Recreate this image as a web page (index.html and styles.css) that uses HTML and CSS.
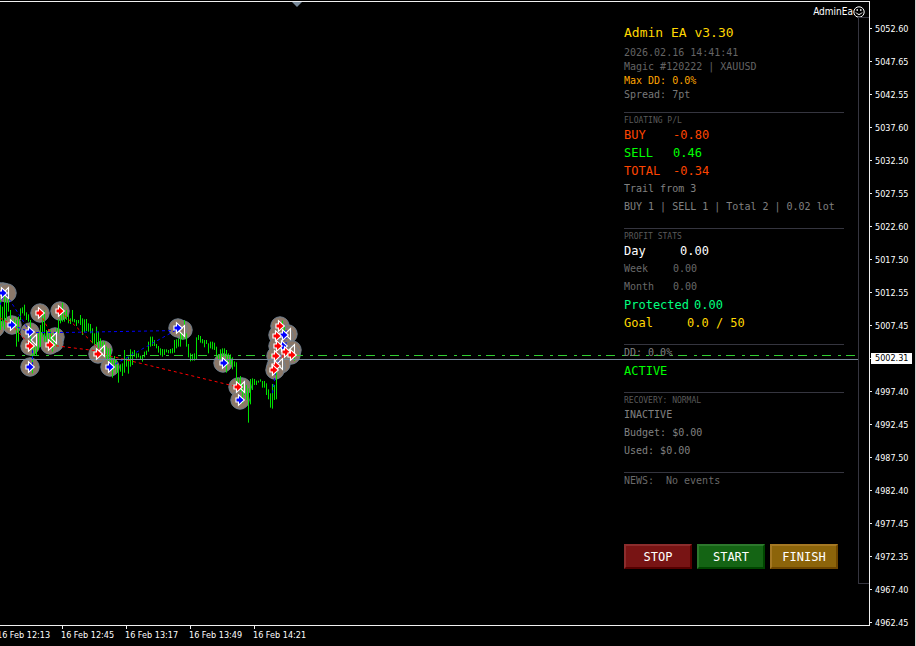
FILE: index.html
```html
<!DOCTYPE html>
<html lang="en">
<head>
<meta charset="utf-8">
<title>Admin EA v3.30</title>
<link rel="stylesheet" href="styles.css">
</head>
<body>
<div class="terminal">
  <main class="chart">
    <svg class="plot" aria-hidden="true">
      <defs>
        <g id="halo"><circle r="9.2"/></g>
        <g id="arrow"><path d="M-3.500-1.500H-1V-4L3.500 0L-1 4V1.500H-3.500z" stroke="#fff" stroke-width="2.2"/><path d="M-3.500-1.500H-1V-4L3.500 0L-1 4V1.500H-3.500z" stroke="none"/></g>
        <path id="tri" d="M-3 0L2.5-5.500V5.500z" fill="none" stroke="#fff" stroke-width="1.1"/>
      </defs>
      <path d="M292 2h10l-5 5z" fill="#778899"/>
      <g fill="#8b7869" stroke="#708090" stroke-width="1">
        <use href="#halo" x="-5" y="328"/><use href="#halo" x="0" y="292"/><use href="#halo" x="3" y="292"/><use href="#halo" x="7" y="293"/>
        <use href="#halo" x="12" y="325"/><use href="#halo" x="30" y="332"/><use href="#halo" x="35" y="339"/><use href="#halo" x="30" y="346"/>
        <use href="#halo" x="30" y="367"/><use href="#halo" x="40" y="313"/><use href="#halo" x="60" y="311"/><use href="#halo" x="55" y="337"/>
        <use href="#halo" x="54" y="343"/><use href="#halo" x="50" y="345"/><use href="#halo" x="103" y="350"/><use href="#halo" x="98" y="354"/>
        <use href="#halo" x="110" y="367"/><use href="#halo" x="183" y="330"/><use href="#halo" x="178" y="328"/><use href="#halo" x="223" y="363"/>
        <use href="#halo" x="242" y="387"/><use href="#halo" x="238" y="387"/><use href="#halo" x="240" y="400"/>
        <use href="#halo" x="280" y="326"/><use href="#halo" x="288" y="334"/><use href="#halo" x="284" y="336"/><use href="#halo" x="278" y="335"/>
        <use href="#halo" x="278" y="346"/><use href="#halo" x="284" y="347"/><use href="#halo" x="286" y="352"/><use href="#halo" x="292" y="350"/>
        <use href="#halo" x="291" y="355"/><use href="#halo" x="276" y="356"/><use href="#halo" x="281" y="364"/><use href="#halo" x="276" y="366"/><use href="#halo" x="275" y="370"/>
      </g>
      <g stroke="#00e600" stroke-width="3">
        <path transform="translate(.167 270) scale(.33333)" d="M1 90V180M7 110V170M13 75V178M19 85V150M25 85V125M31 120V160M37 150V175M43 145V170M49 150V230M55 140V215M61 115V150M67 112V130M73 104V137M79 127V150M85 133V155M91 150V240M97 230V310M103 230V255M109 200V255M115 185V240M121 165V230M127 130V200M133 122V215M139 180V215M145 185V235M151 180V215M157 190V245M163 200V230M169 175V230M175 148V190M181 125V160M187 98V155M193 120V155M199 120V150M205 135V160M211 145V162M217 120V155M223 147V157M229 150V168M235 150V160M241 135V165M247 145V195M253 148V187M259 147V183M265 160V185M271 162V190M277 175V220M283 190V225M289 170V225M295 185V235M301 205V230M307 215V245M313 215V250M319 230V270M325 235V275M331 235V290M337 270V323M343 258V300M349 270V310M355 285V338M361 283V305M367 280V318M373 240V308M379 265V290M385 260V311M391 238V290M397 245V285M403 240V260M409 250V265M415 250V262M421 257V265"/>
        <path transform="translate(140.167 270) scale(.33333)" d="M1 258V268M7 255V275M13 245V262M19 242V255M25 215V245M31 200V230M37 200V228M43 210V228M49 222V235M55 228V248M61 235V256M67 237V260M73 238V255M79 238V247M85 240V250M91 237V250M97 235V250M103 210V248M109 208V235M115 205V230M121 190V230M127 190V210M133 150V205M139 190V230M145 222V262M151 250V274M157 252V272M163 250V272M169 202V270M175 195V210M181 198V218M187 207V220M193 210V232M199 210V222M205 220V250M211 215V235M217 215V238M223 218V240M229 230V262M235 252V268M241 238V268M247 235V262M253 235V255M259 240V308M265 250V282M271 253V285M277 262V298M283 274V290M289 277V350M295 325V355M301 318V365M307 340V400M313 350V375M319 345V390M325 355V458M331 327V403M337 325V360M343 327V345M349 332V345M355 332V338M361 328V335M367 333V353M373 333V353M379 340V375M385 358V388M391 370V413M397 342V416M403 345V390M409 280V388M427 152V185M433 170V200M463 250V272"/>
      </g>
      <g fill="none" stroke-width="1" stroke-dasharray="3 3">
        <path stroke="#0000ff" d="M0 305L6 290M6 294L30 332M12 325L30 332M30 332.500L32.500 345V367M30 332.500L64 332.500L178 330.500M110 367L178 329M272.500 393L276 370L285 340M286 330V350"/>
        <path stroke="#ff0000" d="M0 318L12 325L30 345M40 313L54 340M60 311L100 350M50 345L98 351M98 353L238 387M276 366L278 330M283 330V360M288 352L280 360"/>
      </g>
      <path stroke="#32cd32" stroke-width="1" stroke-dasharray="9 7 3 5" d="M6 355.500H859"/>
      <path stroke="#778899" stroke-width="1" d="M0 359.500H859"/>
      <use href="#tri" x="6" y="293"/><use href="#tri" x="34" y="340"/><use href="#tri" x="54" y="338"/><use href="#tri" x="102" y="351"/><use href="#tri" x="182" y="331"/><use href="#tri" x="242" y="387"/><use href="#tri" x="288" y="334"/><use href="#tri" x="292" y="350"/><use href="#tri" x="280" y="364"/>
      <g fill="#0000ff">
        <use href="#arrow" x="3" y="293"/><use href="#arrow" x="12" y="325"/><use href="#arrow" x="30" y="332"/><use href="#arrow" x="30" y="367"/><use href="#arrow" x="110" y="367"/><use href="#arrow" x="178" y="328"/><use href="#arrow" x="224" y="363"/><use href="#arrow" x="240" y="400"/><use href="#arrow" x="284" y="335"/><use href="#arrow" x="283" y="346"/>
      </g>
      <g fill="#ff0000">
        <use href="#arrow" x="30" y="346"/><use href="#arrow" x="40" y="313"/><use href="#arrow" x="60" y="311"/><use href="#arrow" x="50" y="345"/><use href="#arrow" x="98" y="354"/><use href="#arrow" x="238" y="387"/><use href="#arrow" x="280" y="326"/><use href="#arrow" x="277" y="336"/><use href="#arrow" x="278" y="346"/><use href="#arrow" x="286" y="352"/><use href="#arrow" x="292" y="355"/><use href="#arrow" x="276" y="356"/><use href="#arrow" x="276" y="366"/><use href="#arrow" x="274" y="370"/>
      </g>
    </svg>
    <div class="expert">AdminEa
      <svg width="12" height="12" viewBox="0 0 12 12" aria-hidden="true"><circle cx="6" cy="6" r="5.200" fill="none" stroke="#fff"/><path d="M3.500 4h1.500M7 4h1.500" stroke="#fff" stroke-width="1.500"/><path d="M3 6.500Q6 10.500 9 6.500" fill="none" stroke="#fff"/></svg>
    </div>
    <section class="panel">
      <header class="head">
        <h1>Admin EA v3.30</h1>
        <p>2026.02.16 14:41:41</p>
        <p>Magic #120222 | XAUUSD</p>
        <p class="orange">Max DD: 0.0%</p>
        <p class="soft">Spread: 7pt</p>
      </header>
      <section class="group">
        <h2>FLOATING P/L</h2>
        <p class="big red"><span class="k7">BUY</span>-0.80</p>
        <p class="big green"><span class="k7">SELL</span>0.46</p>
        <p class="big red"><span class="k7">TOTAL</span>-0.34</p>
        <p>Trail from 3</p>
        <p>BUY 1 | SELL 1 | Total 2 | 0.02 lot</p>
      </section>
      <section class="group">
        <h2>PROFIT STATS</h2>
        <p class="big white"><span class="k8">Day</span>0.00</p>
        <p class="dim"><span class="k7">Week</span>0.00</p>
        <p class="dim"><span class="k7">Month</span>0.00</p>
        <p class="big mint"><span class="k10">Protected</span>0.00</p>
        <p class="big gold"><span class="k9">Goal</span>0.0 / 50</p>
      </section>
      <section class="group">
        <p class="lead">DD: 0.0%</p>
        <p class="big green status">ACTIVE</p>
      </section>
      <section class="group">
        <h2>RECOVERY: NORMAL</h2>
        <p>INACTIVE</p>
        <p>Budget: $0.00</p>
        <p>Used: $0.00</p>
      </section>
      <section class="group">
        <p class="lead dim"><span class="k6">NEWS:</span>No events</p>
      </section>
      <div class="actions">
        <button class="stop" type="button">STOP</button>
        <button class="start" type="button">START</button>
        <button class="finish" type="button">FINISH</button>
      </div>
    </section>
  </main>
  <ol class="prices">
    <li>5052.60</li><li>5047.65</li><li>5042.55</li><li>5037.60</li><li>5032.50</li><li>5027.55</li><li>5022.60</li><li>5017.50</li><li>5012.55</li><li>5007.45</li><li class="current"><span>5002.31</span></li><li>4997.40</li><li>4992.45</li><li>4987.50</li><li>4982.40</li><li>4977.45</li><li>4972.35</li><li>4967.40</li><li>4962.45</li>
  </ol>
  <ol class="times">
    <li>16 Feb 12:13</li><li>16 Feb 12:45</li><li>16 Feb 13:17</li><li>16 Feb 13:49</li><li>16 Feb 14:21</li>
  </ol>
</div>
</body>
</html>
```
FILE: styles.css
```css
* { box-sizing: border-box; }

body {
  margin: 0;
  background: #000;
  color: #fff;
  font: 9px/12px "DejaVu Sans Condensed", "Noto Sans", sans-serif;
}

h1, h2, p, ol { margin: 0; padding: 0; font-weight: normal; }
ol { list-style: none; }

.terminal {
  display: grid;
  grid-template-columns: 1fr 46px;
  grid-template-rows: 1fr 20px;
  min-height: 100vh;
  padding-top: 1px;
}

.chart {
  position: relative;
  display: flex;
  flex-direction: column;
  align-items: flex-end;
  border: solid #f0f0f0;
  border-width: 1px 1px 1px 0;
  overflow: hidden;
}

/* Plot coordinates start at the top of the window, two pixels above the chart's content. */
.plot {
  position: absolute;
  inset: -2px 0 0;
  width: 100%;
  height: calc(100% + 2px);
}

.expert {
  position: relative;
  display: flex;
  align-items: center;
  height: 15px;
  padding: 4px 4px 0 0;
  font-size: 10px;
}

.panel {
  position: relative;
  width: 246px;
  padding: 7px 25px 15px 1px;
  font: 10px/18px "DejaVu Sans Mono", "Liberation Mono", monospace;
  color: #808080;
}

/* Frame edge between the panel and the price scale. */
.panel::after {
  content: "";
  position: absolute;
  inset: 0 0 0 auto;
  width: 10px;
  border: 1px solid #35353f;
  border-right: 0;
}

.head { padding-bottom: 10px; color: #646464; line-height: 14px; }
.head h1 { margin-bottom: 4px; font-size: 13px; line-height: 18px; color: #ffd700; }

.group { border-top: 1px solid #35353f; padding: 3px 0 12px; }
.group h2 { font-size: 8px; line-height: 10px; color: #5a5a5a; }
.lead { line-height: 10px; }

.big { font-size: 12px; }
.status { margin-top: 4px; }

.red { color: #ff4500; }
.green { color: #00ff00; }
.orange { color: #ffa500; }
.white { color: #fff; }
.mint { color: #00ff7f; }
.gold { color: #ffd700; }
.dim { color: #696969; }
.soft { color: #787878; }

.k6, .k7, .k8, .k9, .k10 { display: inline-block; }
.k6 { width: 42px; }
.k7 { width: 49px; }
.k8 { width: 56px; }
.k9 { width: 63px; }
.k10 { width: 70px; }

.actions { display: flex; gap: 5px; margin-top: 46px; }

.actions button {
  width: 68px;
  height: 25px;
  padding: 0;
  border: 2px solid;
  font: 12px/20px "DejaVu Sans Mono", "Liberation Mono", monospace;
  color: #fff;
}

.actions .stop { background: #781414; border-color: #8c2d2d #550000 #550000 #8c2d2d; }
.actions .start { background: #146414; border-color: #2d782d #004600 #004600 #2d782d; }
.actions .finish { background: #8c640a; border-color: #a57823 #6e4600 #6e4600 #a57823; }

.prices {
  grid-row: 1 / 3;
  grid-column: 2;
  padding-top: 12px;
  border-right: 1px solid #d0d0d0;
  margin-top: -1px;
}

.prices li { display: flex; align-items: center; height: 33px; }
.prices li::before { content: ""; width: 2px; height: 1px; margin-right: 3px; background: #f0f0f0; }
.prices .current::before { margin-right: 0; width: 1px; }
.prices .current span { padding: 0 4px; background: #fff; color: #000; line-height: 11px; }

.times { display: flex; padding-left: 61px; }
.times li { position: relative; flex: none; width: 64px; padding-top: 3px; white-space: nowrap; }
.times li:first-child { margin-left: -64px; }
.times li::before { content: ""; position: absolute; top: 0; left: 1px; width: 1px; height: 3px; background: #f0f0f0; }
```
